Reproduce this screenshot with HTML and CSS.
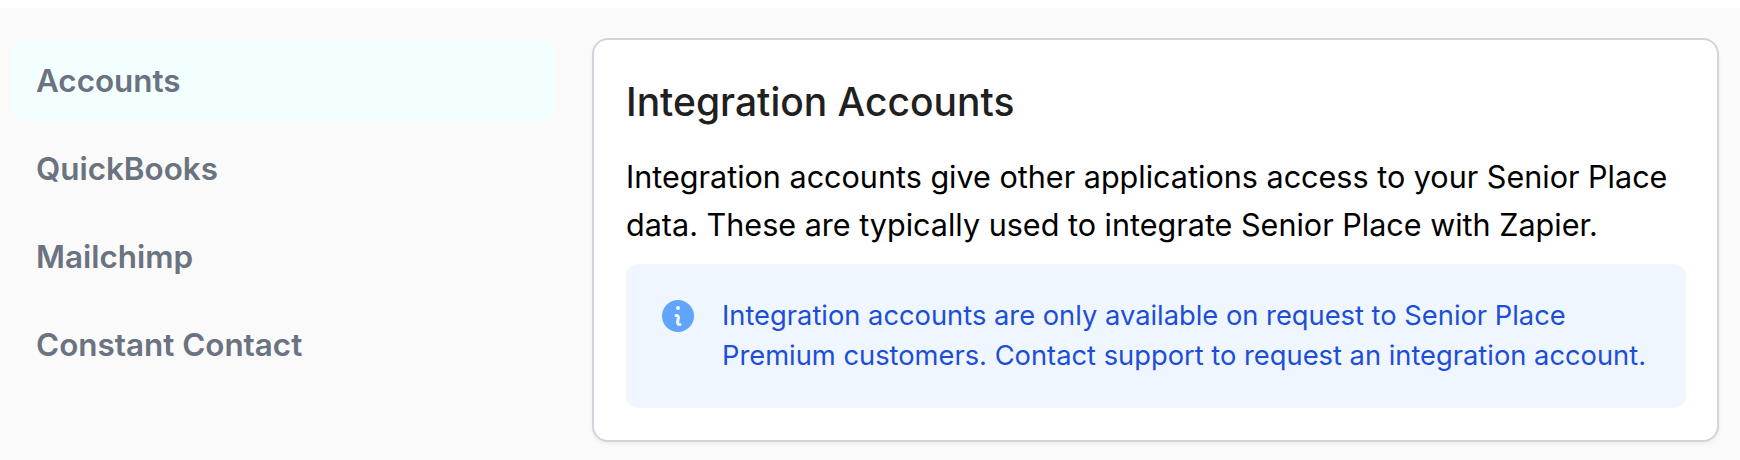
FILE: index.html
```html
<!DOCTYPE html>
<html lang="en">
<head>
<meta charset="utf-8">
<title>Integration Accounts</title>
<link rel="stylesheet" href="styles.css">
</head>
<body>
<main class="page">
  <nav class="side">
    <a class="side-item active">Accounts</a>
    <a class="side-item">QuickBooks</a>
    <a class="side-item">Mailchimp</a>
    <a class="side-item">Constant Contact</a>
  </nav>
  <section class="card">
    <h2 class="title">Integration Accounts</h2>
    <p class="lead">Integration accounts give other applications access to your Senior Place data. These are typically used to integrate Senior Place with Zapier.</p>
    <div class="alert">
      <svg class="alert-icon" viewBox="0 0 20 20" aria-hidden="true"><path fill-rule="evenodd" clip-rule="evenodd" d="M18 10a8 8 0 1 1-16 0 8 8 0 0 1 16 0Zm-7-4a1 1 0 1 1-2 0 1 1 0 0 1 2 0ZM9 9a.75.75 0 0 0 0 1.5h.25a.25.25 0 0 1 .24.3l-.45 2.08A1.75 1.75 0 0 0 10.75 15H11a.75.75 0 0 0 0-1.5h-.25a.25.25 0 0 1-.24-.3l.45-2.08A1.75 1.75 0 0 0 9.25 9H9Z"/></svg>
      <p class="alert-text">Integration accounts are only available on request to Senior Place Premium customers. Contact support to request an integration account.</p>
    </div>
  </section>
</main>
</body>
</html>
```
FILE: styles.css
```css
html, body {
  margin: 0;
  background: #fff;
  font-family: Inter, "Liberation Sans", sans-serif;
}
.page {
  margin-top: 8px;
  height: 452px;
  box-sizing: border-box;
  background: #fafafa;
  display: flex;
  align-items: flex-start;
  padding: 30px 21px 0 12px;
}
.side {
  width: 543px;
  flex: none;
  margin-top: 2px;
  display: flex;
  flex-direction: column;
  gap: 7px;
}
.side-item {
  display: block;
  height: 81px;
  box-sizing: border-box;
  padding: 1px 24px 0;
  border-radius: 12px;
  font-size: 31.4px;
  line-height: 80px;
  font-weight: 600;
  color: #6b7280;
}
.active { background: #f3ffff; }
.card {
  margin-left: 37px;
  flex: 1;
  height: 404px;
  box-sizing: border-box;
  background: #fff;
  border: 2px solid #d1d5db;
  border-radius: 16px;
  box-shadow: 0 2px 4px rgba(0, 0, 0, .05);
  padding: 34px 31px 33px 32px;
}
.title {
  margin: 0;
  font-size: 39px;
  line-height: 56px;
  font-weight: 500;
  color: #1f2020;
}
.lead {
  margin: 23px 0 0;
  font-size: 30.55px;
  line-height: 48px;
  color: #000;
}
.alert {
  margin-top: 15px;
  height: 144px;
  box-sizing: border-box;
  background: #eff6ff;
  border-radius: 12px;
  padding: 32px;
  display: flex;
  gap: 24px;
}
.alert-icon {
  width: 40px;
  height: 40px;
  flex: none;
  fill: #60a5fa;
}
.alert-text {
  margin: 0;
  font-size: 27.3px;
  line-height: 40px;
  color: #1d4ed8;
}
```
